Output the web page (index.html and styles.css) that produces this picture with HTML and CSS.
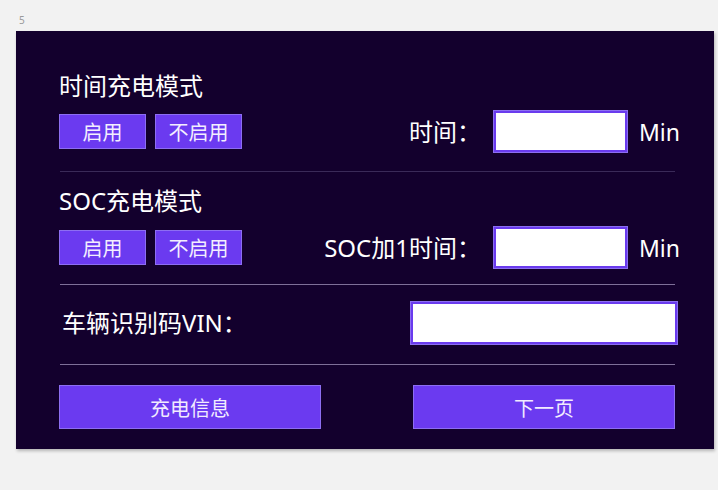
FILE: index.html
```html
<!DOCTYPE html>
<html lang="zh-CN">
<head>
<meta charset="utf-8">
<link rel="stylesheet" href="styles.css">
</head>
<body>
<div class="page-label">5</div>
<div class="panel">
  <div class="title">时间充电模式</div>
  <div class="row">
    <div class="btn">启用</div>
    <div class="btn">不启用</div>
    <div class="field">
      <span class="label">时间：</span>
      <div class="input small"></div>
      <span class="unit">Min</span>
    </div>
  </div>
  <div class="divider dim"></div>
  <div class="title t2">SOC充电模式</div>
  <div class="row r2">
    <div class="btn">启用</div>
    <div class="btn">不启用</div>
    <div class="field">
      <span class="label">SOC加1时间：</span>
      <div class="input small"></div>
      <span class="unit">Min</span>
    </div>
  </div>
  <div class="divider d2"></div>
  <div class="vin-row">
    <span class="label vin-label">车辆识别码VIN：</span>
    <div class="input wide"></div>
  </div>
  <div class="divider d3"></div>
  <div class="actions">
    <div class="action">充电信息</div>
    <div class="action">下一页</div>
  </div>
</div>
</body>
</html>
```
FILE: styles.css
```css
* { box-sizing: border-box; }
html, body { margin: 0; padding: 0; }
body {
  background: #f2f2f2;
  width: 718px;
  height: 490px;
  font-family: "Noto Sans", "Noto Sans CJK SC", sans-serif;
  position: relative;
}
.page-label {
  position: absolute;
  left: 19px;
  top: 13px;
  font-size: 10px;
  color: #9a9a9a;
}
.panel {
  position: absolute;
  left: 16px;
  top: 31px;
  width: 698px;
  height: 418px;
  background: #13002d;
  box-shadow: 1px 2px 3px rgba(0,0,0,0.25);
  padding: 43px 34px 0 43px;
  display: flex;
  flex-direction: column;
  color: #ffffff;
}
.title {
  font-size: 24px;
  line-height: 24px;
  height: 24px;
}
.t2 { margin-top: 17px; }
.row {
  display: flex;
  align-items: center;
  height: 43px;
  margin-top: 12px;
}
.r2 { margin-top: 13px; }
.btn {
  width: 87px;
  height: 35px;
  background: #6b3af0;
  border: 1px solid #8d6ef2;
  color: #f3eeff;
  font-size: 20px;
  display: flex;
  align-items: center;
  justify-content: center;
  margin-right: 9px;
}
.field {
  margin-left: auto;
  display: flex;
  align-items: center;
}
.label {
  font-size: 24px;
  line-height: 24px;
}
.input {
  background: #ffffff;
  border: 3px solid #6a3bee;
  outline: 1px solid #8c6ff0;
  outline-offset: -1px;
}
.small {
  width: 135px;
  height: 43px;
  margin-left: 12px;
}
.unit {
  font-size: 23px;
  margin-left: 11px;
}
.divider {
  height: 1px;
  background: #7e6f98;
  margin-right: 5px;
  margin-left: 1px;
}
.dim { background: #3a2a58; margin-top: 18px; }
.d2 { margin-top: 15px; }
.d3 { margin-top: 19px; }
.vin-row {
  display: flex;
  align-items: center;
  height: 44px;
  margin-top: 16px;
}
.vin-label { margin-left: 3px; }
.wide {
  width: 268px;
  height: 44px;
  margin-left: auto;
  margin-right: 2px;
}
.actions {
  display: flex;
  justify-content: space-between;
  margin-top: 20px;
  margin-right: 5px;
}
.action {
  width: 262px;
  height: 44px;
  background: #6b3af0;
  border: 1px solid #8d6ef2;
  color: #f1ebff;
  font-size: 20px;
  display: flex;
  align-items: center;
  justify-content: center;
}
```
